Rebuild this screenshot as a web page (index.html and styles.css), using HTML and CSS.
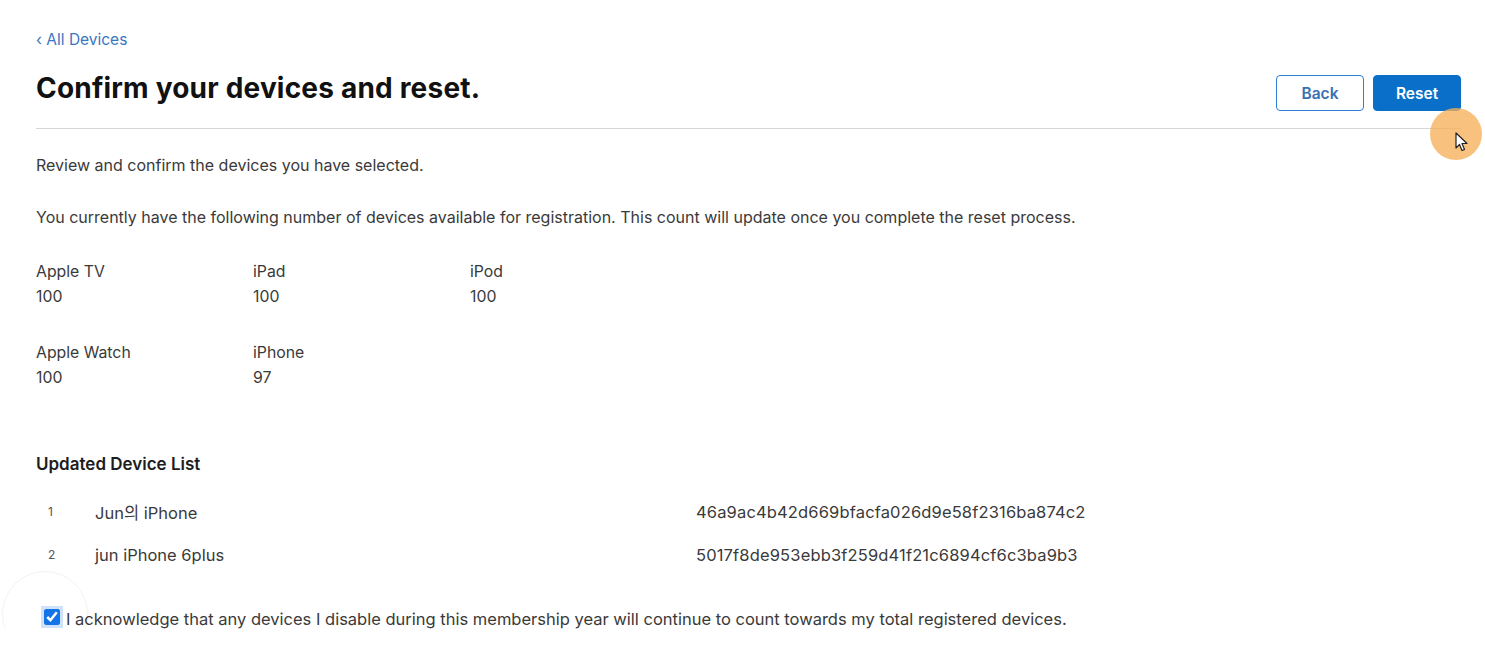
FILE: index.html
```html
<!DOCTYPE html>
<html lang="en">
<head>
    <meta charset="UTF-8">
    <title>Confirm your devices and reset</title>
    <link rel="stylesheet" href="styles.css">
</head>
<body>
    <div class="page">
        <a href="#" class="back-link">&lsaquo; All Devices</a>

        <div class="header">
            <h1>Confirm your devices and reset.</h1>
            <div class="actions">
                <button type="button" class="btn btn-secondary">Back</button>
                <button type="button" class="btn btn-primary">Reset</button>
            </div>
        </div>

        <p class="intro">Review and confirm the devices you have selected.</p>
        <p class="intro">You currently have the following number of devices available for registration. This count will update once you complete the reset process.</p>

        <div class="counts">
            <div class="count">
                <span class="count-label">Apple TV</span>
                <span class="count-value">100</span>
            </div>
            <div class="count">
                <span class="count-label">iPad</span>
                <span class="count-value">100</span>
            </div>
            <div class="count">
                <span class="count-label">iPod</span>
                <span class="count-value">100</span>
            </div>
            <div class="count">
                <span class="count-label">Apple Watch</span>
                <span class="count-value">100</span>
            </div>
            <div class="count">
                <span class="count-label">iPhone</span>
                <span class="count-value">97</span>
            </div>
        </div>

        <h2>Updated Device List</h2>
        <ol class="device-list">
            <li class="device-row">
                <span class="device-num">1</span>
                <span class="device-name">Jun의 iPhone</span>
                <span class="device-id">46a9ac4b42d669bfacfa026d9e58f2316ba874c2</span>
            </li>
            <li class="device-row">
                <span class="device-num">2</span>
                <span class="device-name">jun iPhone 6plus</span>
                <span class="device-id">5017f8de953ebb3f259d41f21c6894cf6c3ba9b3</span>
            </li>
        </ol>

        <label class="ack">
            <span class="click-ring"></span>
            <input type="checkbox" checked>
            <span>I acknowledge that any devices I disable during this membership year will continue to count towards my total registered devices.</span>
        </label>
    </div>

    <div class="cursor-spot">
        <svg class="cursor" width="14" height="20" viewBox="0 0 14 20">
            <path d="M1 1 L1 16 L4.5 12.5 L7 18.5 L9.5 17.5 L7 11.5 L12 11.5 Z" fill="#fff" stroke="#222" stroke-width="1.2" stroke-linejoin="round"/>
        </svg>
    </div>
</body>
</html>
```

FILE: styles.css
```css
body {
    margin: 0;
    background: #fff;
    font-family: Inter, "Noto Sans CJK KR", sans-serif;
    color: #3a3a3a;
}
.page {
    padding: 29px 24px 0 36px;
    max-width: 1425px;
}
.back-link {
    display: inline-block;
    font-size: 15.5px;
    color: #3a76c0;
    text-decoration: none;
}
.header {
    display: flex;
    justify-content: space-between;
    align-items: flex-start;
    margin-top: 16px;
    padding-bottom: 17px;
    border-bottom: 1px solid #d6d6d6;
}
h1 {
    margin: 6px 0 0 0;
    font-size: 28px;
    font-weight: 700;
    color: #111;
    letter-spacing: 0.2px;
}
.actions {
    display: flex;
    gap: 9px;
    margin-top: 10px;
}
.btn {
    height: 36px;
    width: 88px;
    border-radius: 4px;
    font-family: Inter, sans-serif;
    font-size: 15.5px;
    font-weight: 600;
    cursor: pointer;
}
.btn-secondary {
    background: #fff;
    color: #3a6fb0;
    border: 1px solid #2f7fd0;
}
.btn-primary {
    background: #0a6fc8;
    color: #fff;
    border: 1px solid #0a6fc8;
}
.intro {
    margin: 26px 0 0 0;
    font-size: 16px;
    line-height: 20px;
}
.intro + .intro {
    margin-top: 32px;
}
.counts {
    display: grid;
    grid-template-columns: repeat(3, 217px);
    row-gap: 36px;
    margin-top: 35px;
}
.count {
    display: flex;
    flex-direction: column;
    gap: 5px;
    font-size: 15.8px;
    line-height: 20px;
}
h2 {
    margin: 66px 0 0 0;
    font-size: 17px;
    font-weight: 600;
    color: #1d1d1d;
}
.device-list {
    list-style: none;
    margin: 16px 0 0 0;
    padding: 0;
}
.device-row {
    display: grid;
    grid-template-columns: 59px 601px auto;
    align-items: center;
    height: 43px;
    font-size: 16.5px;
}
.device-id {
    letter-spacing: 0.15px;
}
.device-num {
    font-size: 12px;
    padding-left: 12px;
    color: #555;
}
.ack {
    position: relative;
    display: flex;
    align-items: center;
    gap: 6px;
    margin-top: 33px;
    font-size: 16.5px;
}
.ack input {
    width: 16px;
    height: 16px;
    margin: 0 0 4px 8px;
    accent-color: #1473e6;
    outline: 3px solid #cfe2fa;
}
.click-ring {
    position: absolute;
    z-index: -1;
    left: -34px;
    top: -38px;
    width: 84px;
    height: 84px;
    border-radius: 50%;
    border: 1px solid #f3f3f3;
}
.cursor-spot {
    position: absolute;
    left: 1430px;
    top: 108px;
    width: 52px;
    height: 52px;
    border-radius: 50%;
    background: rgba(246, 176, 88, 0.78);
}
.cursor {
    position: absolute;
    left: 25px;
    top: 24px;
}
```
